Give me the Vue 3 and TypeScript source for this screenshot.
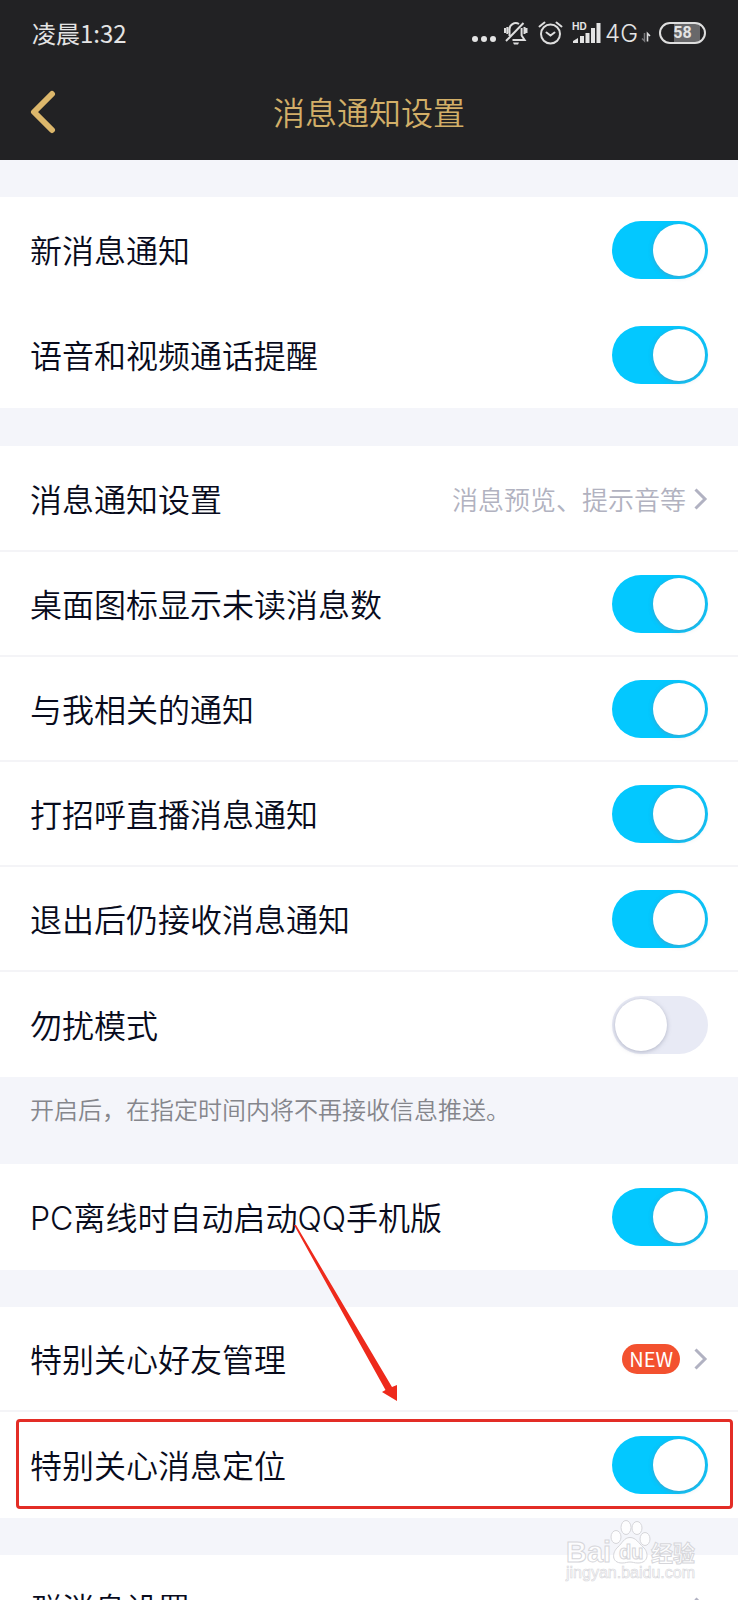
<script setup lang="ts">
import { reactive } from 'vue'

interface Row {
  id: string
  label: string
  kind: 'switch' | 'link'
  on?: boolean
  value?: string
  badge?: string
  marked?: boolean
}

interface Group {
  id: string
  divided: boolean
  rows: Row[]
  note?: string
}

const groups = reactive<Group[]>([
  {
    id: 'basic',
    divided: false,
    rows: [
      { id: 'new-message', label: '新消息通知', kind: 'switch', on: true },
      { id: 'calls', label: '语音和视频通话提醒', kind: 'switch', on: true },
    ],
  },
  {
    id: 'notify',
    divided: true,
    note: '开启后，在指定时间内将不再接收信息推送。',
    rows: [
      { id: 'notify-settings', label: '消息通知设置', kind: 'link', value: '消息预览、提示音等' },
      { id: 'unread', label: '桌面图标显示未读消息数', kind: 'switch', on: true },
      { id: 'related', label: '与我相关的通知', kind: 'switch', on: true },
      { id: 'live', label: '打招呼直播消息通知', kind: 'switch', on: true },
      { id: 'after-exit', label: '退出后仍接收消息通知', kind: 'switch', on: true },
      { id: 'dnd', label: '勿扰模式', kind: 'switch', on: false },
    ],
  },
  {
    id: 'pc',
    divided: true,
    rows: [{ id: 'pc-offline', label: 'PC离线时自动启动QQ手机版', kind: 'switch', on: true }],
  },
  {
    id: 'care',
    divided: true,
    rows: [
      { id: 'care-friends', label: '特别关心好友管理', kind: 'link', badge: 'NEW' },
      { id: 'care-locate', label: '特别关心消息定位', kind: 'switch', on: true, marked: true },
    ],
  },
  {
    id: 'group',
    divided: true,
    rows: [{ id: 'group-settings', label: '群消息设置', kind: 'link' }],
  },
])
</script>

<template>
  <div class="page">
    <header class="top">
      <div class="status">
        <span class="time">凌晨1:32</span>
        <div class="status-icons">
          <svg width="24" height="24" viewBox="0 0 24 24" fill="#e4e4e4" aria-hidden="true">
            <circle cx="3" cy="18" r="3" /><circle cx="12" cy="18" r="3" /><circle cx="21" cy="18" r="3" />
          </svg>
          <svg width="26" height="24" viewBox="0 0 26 24" fill="none" stroke="#dedede" stroke-width="2" aria-hidden="true">
            <path d="M5.500 15V9a6.300 6.300 0 0 1 9.500-6M17.600 7v7.500l3 4.500H8.500M2 20L19.500 2M1 7v5M3.300 6v7M22.500 7v5M20.500 6v7" />
            <path d="M9 21.500h6l-1 2h-4z" fill="#dedede" stroke="none" />
          </svg>
          <svg width="26" height="24" viewBox="0 0 26 24" fill="none" stroke="#dedede" stroke-width="2" stroke-linecap="round" aria-hidden="true">
            <circle cx="12.500" cy="13" r="9.500" />
            <path d="M8.500 11.500l4 3 4-3M1.500 5.500l5-4M23.500 5.500l-5-4" />
          </svg>
          <div class="network">
            <svg width="30" height="24" viewBox="0 0 30 24" fill="#e4e4e4" aria-hidden="true">
              <path d="M1 22v-2l5-3v5zM8 15h4v7H8zM13.500 12h4v10h-4zM19 7h4v15h-4zM24.500 2h4v20h-4z" />
              <text x="0" y="9" class="hd">HD</text>
            </svg>
            <span class="net-type">4G</span>
            <svg width="10" height="24" viewBox="0 0 10 24" fill="none" aria-hidden="true">
              <path d="M3.500 12v8L1 17.500" stroke="#77777a" stroke-width="1.500" />
              <path d="M6.500 20.500v-8L9 15" stroke="#dcdcdc" stroke-width="1.600" />
            </svg>
          </div>
          <span class="battery">58</span>
        </div>
      </div>
      <div class="nav">
        <button class="back" type="button" aria-label="返回">
          <svg width="26" height="44" viewBox="0 0 26 44" fill="none" stroke="#dcb76b" stroke-width="6" stroke-linecap="round" stroke-linejoin="round" aria-hidden="true">
            <path d="M22 4L4 22l18 18" />
          </svg>
        </button>
        <h1 class="title">消息通知设置</h1>
      </div>
    </header>

    <main>
      <template v-for="group in groups" :key="group.id">
        <section class="group" :class="{ divided: group.divided, noted: group.note }">
          <div v-for="row in group.rows" :key="row.id" class="cell">
            <label v-if="row.kind === 'switch'" class="row" :for="row.id">
              <span class="label">{{ row.label }}</span>
              <input :id="row.id" v-model="row.on" class="switch" type="checkbox" role="switch" />
            </label>
            <a v-else class="row" :href="'#' + row.id">
              <span class="label">{{ row.label }}</span>
              <span v-if="row.value" class="value">{{ row.value }}</span>
              <span v-if="row.badge" class="badge">{{ row.badge }}</span>
              <svg class="chevron" width="14" height="22" viewBox="0 0 14 22" fill="none" stroke="#b1b2c2" stroke-width="3" aria-hidden="true">
                <path d="M1.500 1.500L11 11l-9.500 9.500" />
              </svg>
            </a>
            <template v-if="row.marked">
              <div class="mark"></div>
              <svg class="arrow" width="104" height="178" viewBox="0 0 104 178" fill="#ee2a1c" aria-hidden="true">
                <path d="M0 0h2L98 162l5-2v16L88 167l3.500-2z" />
              </svg>
            </template>
          </div>
        </section>
        <p v-if="group.note" class="note">{{ group.note }}</p>
      </template>
    </main>

    <svg class="watermark" width="136" height="66" viewBox="0 0 136 66" aria-hidden="true">
      <g fill="#ffffff" fill-opacity="0.8" stroke="#d6d6da" stroke-width="1">
        <text x="1" y="43" class="wm-bai">Bai</text>
        <ellipse cx="51" cy="18" rx="5" ry="6.500" />
        <ellipse cx="61" cy="8.500" rx="5" ry="7" />
        <ellipse cx="72" cy="9" rx="5" ry="6.500" />
        <ellipse cx="80" cy="20" rx="5" ry="6.500" />
        <path d="M65 18.500c-6 0-8 6-12 9.500-6 5-7 16 4 16 4 0 5-1 8-1s4 1 8 1c11 0 11-11 5-16-4-3.500-7-9.500-13-9.500z" />
        <text x="54" y="40" class="wm-du">du</text>
        <text x="86" y="42" class="wm-cn">经验</text>
        <text x="1" y="59" class="wm-url">jingyan.baidu.com</text>
      </g>
    </svg>
  </div>
</template>

<style>
body {
  margin: 0;
  background: #f4f5fa;
}
</style>

<style scoped>
.page {
  position: relative;
  height: 100vh;
  overflow: hidden;
  background: #f4f5fa;
  color: #080b1c;
  font-family: Inter, 'Noto Sans CJK SC DemiLight', 'Noto Sans CJK SC', sans-serif;
  font-weight: 350;
}

.top {
  height: 160px;
  background: #222224;
}

.status {
  display: flex;
  align-items: center;
  justify-content: space-between;
  height: 66px;
  padding: 0 32px;
  color: #e4e4e4;
}

.time {
  padding-bottom: 2px;
  font-size: 24px;
  font-weight: 400;
  font-family: 'Noto Sans CJK SC', sans-serif;
}

.status-icons,
.network {
  display: flex;
  align-items: center;
}

.status-icons {
  gap: 8px;
}

.network {
  gap: 3px;
}

.hd {
  font: 700 10px Inter, sans-serif;
}

.net-type {
  font-size: 24px;
}

.battery {
  box-sizing: border-box;
  width: 47px;
  height: 22px;
  border: 2px solid #dedede;
  border-radius: 11px;
  background: linear-gradient(90deg, #222224 30%, #68686a 30%, #68686a 90%, #222224 90%);
  font-family: Roboto, sans-serif;
  font-size: 16px;
  font-weight: 700;
  line-height: 18px;
  text-align: center;
}

.nav {
  display: grid;
  grid-template-columns: 56px 1fr 56px;
  align-items: center;
  height: 92px;
}

.back {
  display: flex;
  justify-content: flex-end;
  padding: 0;
  border: 0;
  background: none;
}

.title {
  margin: 0;
  padding-top: 4px;
  color: #d2af68;
  font-size: 32px;
  font-weight: 350;
  line-height: 48px;
  text-align: center;
}

.group {
  margin-top: 37px;
  padding-bottom: 1px;
  background: #fff;
}

.noted {
  margin-top: 38px;
  padding: 1px 0 0;
}

.note + .group {
  margin-top: 0;
}

.cell {
  position: relative;
}

.row {
  box-sizing: border-box;
  display: flex;
  align-items: center;
  height: 105px;
  padding: 0 30px;
  color: inherit;
  text-decoration: none;
}

.divided .cell:not(:last-child) .row {
  border-bottom: 2px solid #f4f4f7;
}

.label {
  flex: 1;
  padding-top: 4px;
  font-size: 32px;
  line-height: 48px;
}

.value {
  margin-right: 8px;
  color: #b1b2c0;
  font-size: 26px;
}

.badge {
  margin-right: 14px;
  padding: 0 7px;
  border-radius: 15px;
  background: #f3512f;
  color: #fff;
  font-family: 'Noto Sans CJK SC', sans-serif;
  font-size: 20px;
  font-weight: 400;
  line-height: 30px;
}

.switch {
  appearance: none;
  box-sizing: border-box;
  flex: none;
  width: 96px;
  height: 58px;
  margin: 0;
  padding: 3px;
  border-radius: 29px;
  background: #e8eaf5;
}

.switch::before {
  content: '';
  display: block;
  width: 52px;
  height: 52px;
  border-radius: 50%;
  background: #fff;
  box-shadow: 0 1px 4px rgba(120, 125, 150, 0.5);
}

.switch:checked {
  background: #03c8ff;
}

.switch:checked::before {
  margin-left: auto;
}

.note {
  box-sizing: border-box;
  height: 87px;
  margin: 0;
  padding: 16px 30px;
  color: #85868c;
  font-size: 24px;
  line-height: 36px;
}

.mark {
  position: absolute;
  inset: 7px 5px 8px 16px;
  border: 3px solid #e32d26;
  border-radius: 4px;
  pointer-events: none;
}

.arrow {
  position: absolute;
  top: -187px;
  left: 294px;
  pointer-events: none;
}

.watermark {
  position: absolute;
  right: 37px;
  bottom: 15px;
  pointer-events: none;
}

.wm-bai {
  font: 700 29px 'Liberation Sans', sans-serif;
}

.wm-du {
  font: 700 20px 'Liberation Sans', sans-serif;
}

.wm-cn {
  font: 700 22px 'Noto Sans CJK SC', sans-serif;
}

.wm-url {
  font: 400 16px 'Liberation Sans', sans-serif;
  stroke-width: 0.6px;
}
</style>
